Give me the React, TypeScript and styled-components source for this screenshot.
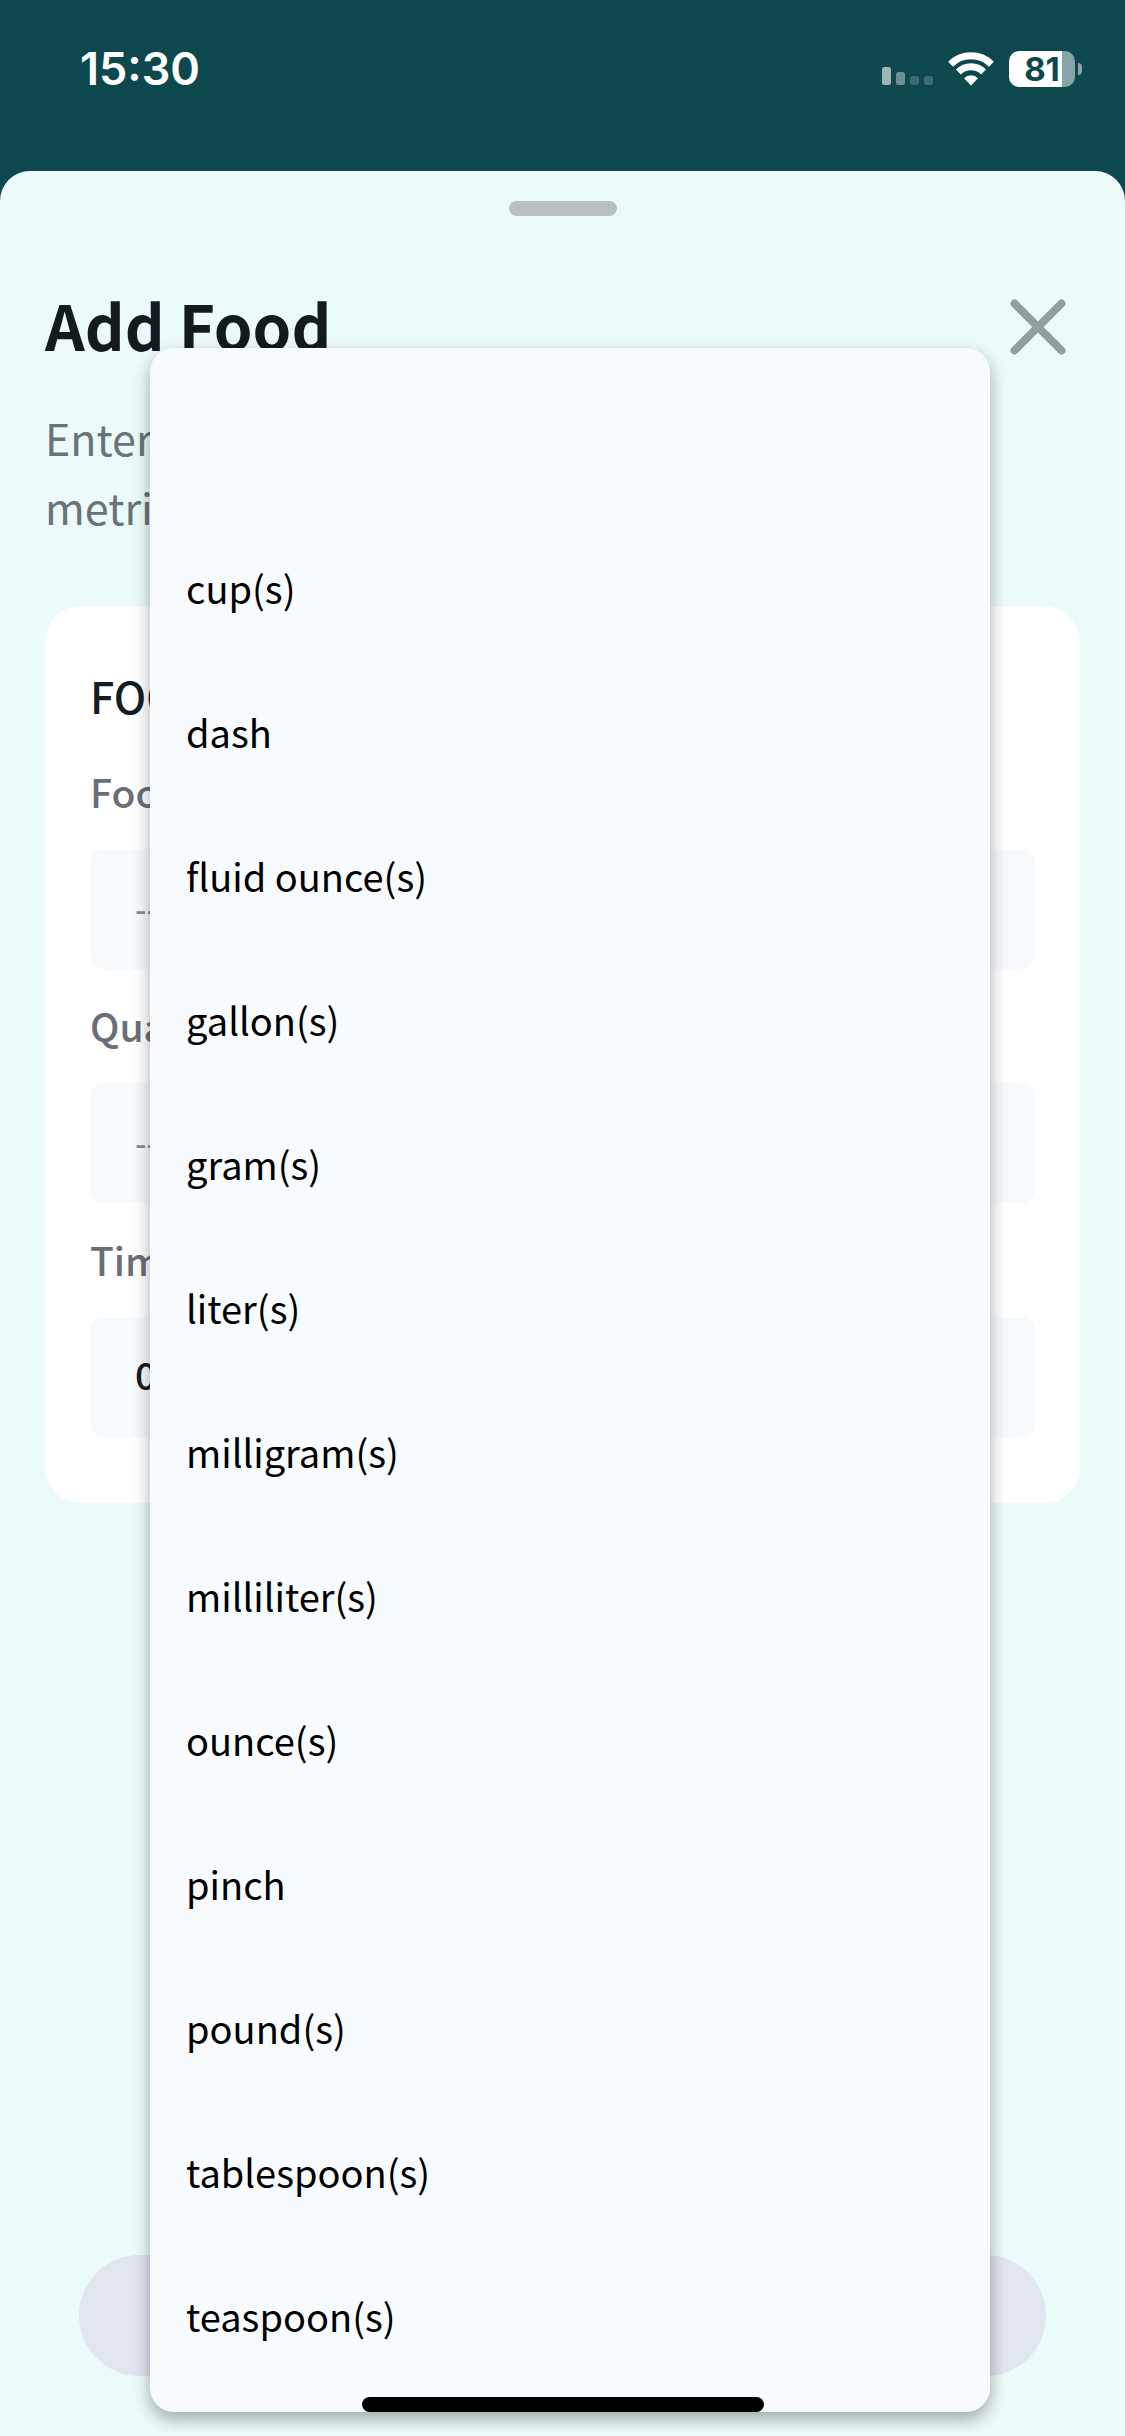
import React from 'react';
import styled, { createGlobalStyle } from 'styled-components';

const GlobalStyle = createGlobalStyle`
  *, *::before, *::after { box-sizing: border-box; }
  body {
    margin: 0;
    background: #0c484d;
    font-family: "Noto Sans CJK SC", "Noto Sans", sans-serif;
  }
  button, input { font: inherit; border: 0; }
`;

const Screen = styled.div`
  position: relative;
  display: flex;
  flex-direction: column;
  min-height: 100vh;
  background: #0c484d;
`;

const StatusBar = styled.header`
  display: flex;
  justify-content: space-between;
  align-items: center;
  padding: 45px 43px 78px 80px;
  color: #fff;
  font-family: Inter, sans-serif;
`;

const Clock = styled.time`
  font-size: 45px;
  font-weight: 600;
  line-height: 48px;
`;

const Indicators = styled.div`
  display: flex;
  align-items: center;
  gap: 15px;
`;

const Battery = styled.div`
  display: flex;
  align-items: center;
  gap: 3px;
`;

const BatteryBody = styled.div`
  width: 66px;
  height: 36px;
  border-radius: 10px;
  background: linear-gradient(to right, #fff 80%, #86a4a7 80%);
  color: #0c484d;
  font-size: 33px;
  font-weight: 700;
  line-height: 36px;
  text-align: center;
`;

const BatteryTip = styled.div`
  width: 4px;
  height: 12px;
  border-radius: 0 4px 4px 0;
  background: #86a4a7;
`;

const Sheet = styled.main`
  flex: 1;
  display: flex;
  flex-direction: column;
  padding: 30px 45px 60px;
  border-radius: 30px 30px 0 0;
  background: #ecfafa;
`;

const Handle = styled.div`
  align-self: center;
  width: 108px;
  height: 15px;
  border-radius: 8px;
  background: #b7bfc2;
`;

const TitleRow = styled.div`
  display: flex;
  justify-content: space-between;
  align-items: center;
  margin-top: 66px;
`;

const Title = styled.h1`
  margin: 0;
  padding-bottom: 6px;
  color: #131b20;
  font-size: 62px;
  font-weight: 700;
  line-height: 84px;
`;

const CloseButton = styled.button`
  display: flex;
  padding: 0;
  margin-right: 14px;
  background: none;
`;

const Intro = styled.p`
  margin: 31px 0 65px;
  color: #6a7377;
  font-size: 43px;
  line-height: 69px;
`;

const IntroLine = styled.span`
  display: block;
`;

const Card = styled.section`
  display: flex;
  flex-direction: column;
  gap: 28px;
  padding: 59px 45px 66px;
  border-radius: 36px;
  background: #fff;
`;

const CardTitle = styled.h2`
  margin: 0 0 10px;
  color: #161c23;
  font-size: 43px;
  font-weight: 500;
  line-height: 60px;
`;

const Field = styled.div`
  display: flex;
  flex-direction: column;
  gap: 30px;
`;

const Label = styled.label`
  color: #696e78;
  font-size: 39px;
  font-weight: 500;
  line-height: 56px;
`;

const TextBox = styled.input`
  width: 100%;
  height: 120px;
  padding: 0 45px 8px;
  border-radius: 14px;
  background: #f7fafd;
  color: #171d21;
  font-size: 38px;
  font-weight: 500;

  &::placeholder {
    color: #868c90;
    font-size: 32px;
    opacity: 1;
  }
`;

const SaveButton = styled.button`
  height: 121px;
  margin: auto 34px 0;
  border-radius: 61px;
  background: #e0e5ee;
  color: #fff;
  font-size: 43px;
  font-weight: 500;
`;

const Menu = styled.div`
  position: absolute;
  top: 348px;
  left: 150px;
  right: 135px;
  display: flex;
  flex-direction: column;
  padding: 24px 0;
  border-radius: 24px;
  background: #f7fbfe;
  box-shadow: 0 8px 16px rgba(0, 0, 0, 0.28), 0 2px 24px rgba(0, 0, 0, 0.06);
`;

const MenuItem = styled.button`
  height: 144px;
  padding: 0 36px;
  background: none;
  color: #000;
  font-size: 38px;
  line-height: 56px;
  text-align: left;
`;

const HomeIndicator = styled.div`
  position: absolute;
  bottom: 24px;
  left: 50%;
  width: 402px;
  height: 15px;
  border-radius: 8px;
  background: #000;
  transform: translateX(-50%);
`;

const units = [
  '',
  'cup(s)',
  'dash',
  'fluid ounce(s)',
  'gallon(s)',
  'gram(s)',
  'liter(s)',
  'milligram(s)',
  'milliliter(s)',
  'ounce(s)',
  'pinch',
  'pound(s)',
  'tablespoon(s)',
  'teaspoon(s)',
];

const SignalIcon = () => (
  <svg width="51" height="36" viewBox="0 0 51 36" fill="#fff" aria-hidden="true">
    <rect x="0" y="16" width="9" height="18" rx="2.5" opacity="0.6" />
    <rect x="14" y="21" width="9" height="13" rx="2.5" opacity="0.4" />
    <rect x="28" y="25" width="9" height="9" rx="2.5" opacity="0.2" />
    <rect x="42" y="25" width="9" height="9" rx="2.5" opacity="0.2" />
  </svg>
);

const WifiIcon = () => (
  <svg width="46" height="36" viewBox="0 0 46 36" aria-hidden="true">
    <g fill="none" stroke="#fff" strokeWidth="7">
      <path d="M2.6 13.2a29 29 0 0 1 40.8 0" />
      <path d="M10.4 21a18 18 0 0 1 25.2 0" />
    </g>
    <path d="M23 34.5l-7-7.3a10 10 0 0 1 14 0z" fill="#fff" />
  </svg>
);

const CloseIcon = () => (
  <svg width="56" height="56" viewBox="0 0 56 56" aria-hidden="true">
    <path d="M4.500 4.500L51.500 51.500M51.500 4.500L4.500 51.500" stroke="#949d9f" strokeWidth="8" strokeLinecap="round" />
  </svg>
);

export default function App() {
  return (
    <>
      <GlobalStyle />
      <Screen>
        <StatusBar>
          <Clock>15:30</Clock>
          <Indicators>
            <SignalIcon />
            <WifiIcon />
            <Battery>
              <BatteryBody>81</BatteryBody>
              <BatteryTip />
            </Battery>
          </Indicators>
        </StatusBar>

        <Sheet>
          <Handle />
          <TitleRow>
            <Title>Add Food</Title>
            <CloseButton type="button" aria-label="Close">
              <CloseIcon />
            </CloseButton>
          </TitleRow>
          <Intro>
            <IntroLine>Enter a food and its</IntroLine>
            <IntroLine>metric quantity</IntroLine>
          </Intro>

          <Card>
            <CardTitle>FOOD</CardTitle>
            <Field>
              <Label htmlFor="food">Food</Label>
              <TextBox id="food" placeholder="--" />
            </Field>
            <Field>
              <Label htmlFor="quantity">Quantity</Label>
              <TextBox id="quantity" placeholder="--" />
            </Field>
            <Field>
              <Label htmlFor="time">Time</Label>
              <TextBox id="time" defaultValue="03:30 PM" />
            </Field>
          </Card>

          <SaveButton type="button">Save</SaveButton>
        </Sheet>

        <Menu role="listbox" aria-label="Unit">
          {units.map((unit) => (
            <MenuItem key={unit} type="button" role="option" aria-selected={unit === ''} aria-label={unit || 'No unit'}>
              {unit}
            </MenuItem>
          ))}
        </Menu>
        <HomeIndicator />
      </Screen>
    </>
  );
}
